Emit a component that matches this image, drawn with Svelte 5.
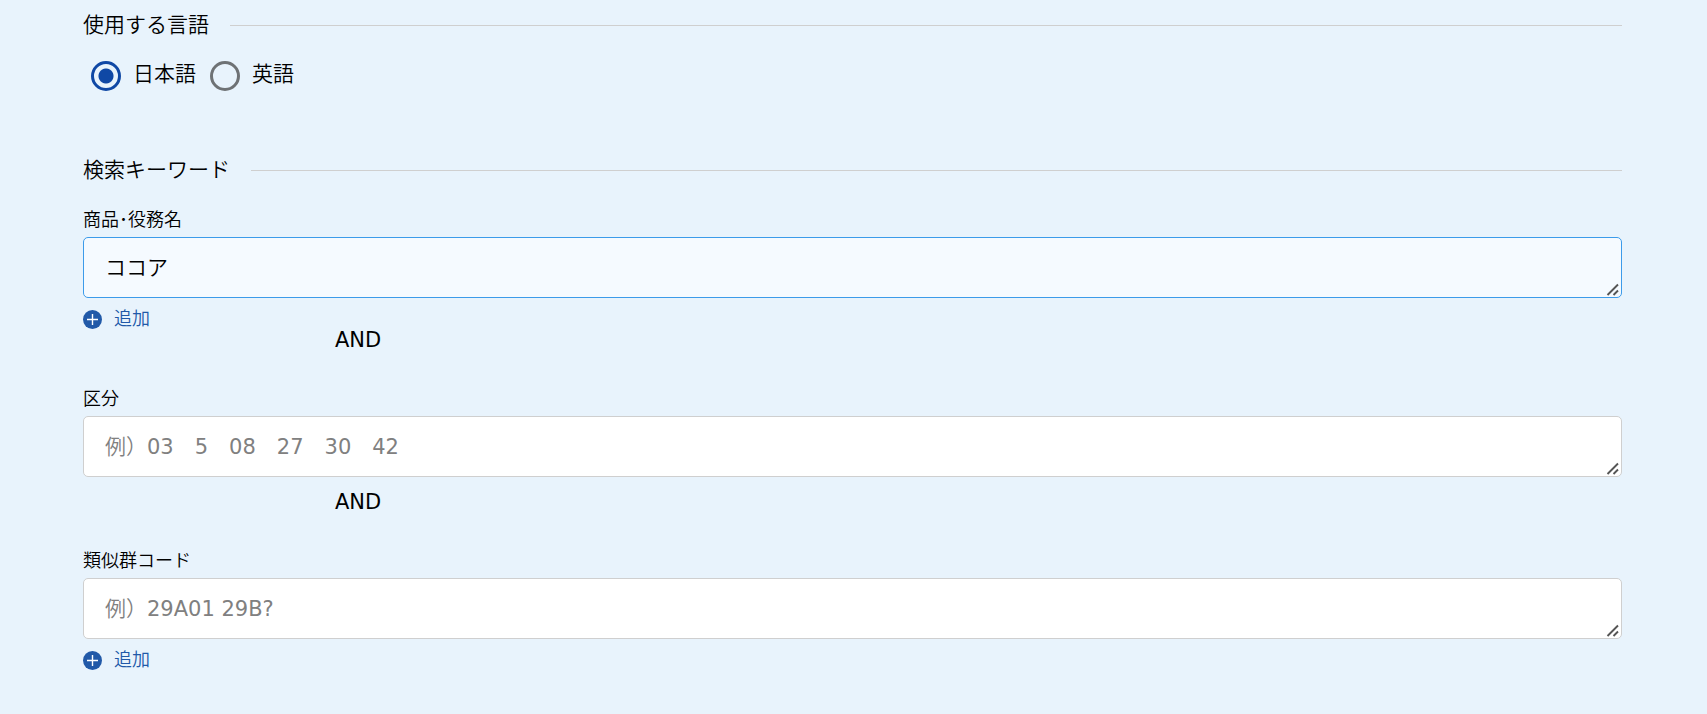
<script>
  let language = $state('ja');
  let goods = $state('ココア');
</script>

<main>
  <fieldset class="language">
    <legend class="heading">使用する言語</legend>
    <div class="radios">
      <label><input type="radio" name="language" value="ja" bind:group={language} />日本語</label>
      <label><input type="radio" name="language" value="en" bind:group={language} />英語</label>
    </div>
  </fieldset>

  <section>
    <h2 class="heading">検索キーワード</h2>
    <div class="field">
      <label for="goods">商品･役務名</label>
      <textarea id="goods" class="active" rows="1" bind:value={goods}></textarea>
      {@render add()}
    </div>
    <p class="and close">AND</p>
    <div class="field">
      <label for="division">区分</label>
      <textarea id="division" rows="1" placeholder="例）03　5　08　27　30　42"></textarea>
    </div>
    <p class="and">AND</p>
    <div class="field">
      <label for="code">類似群コード</label>
      <textarea id="code" rows="1" placeholder="例）29A01 29B?"></textarea>
      {@render add()}
    </div>
  </section>
</main>

{#snippet add()}
  <button type="button" class="add">
    <svg viewBox="0 0 19 19" aria-hidden="true"><circle cx="9.5" cy="9.5" r="9.5" /><path d="M9.5 4v11M4 9.5h11" /></svg>
    追加
  </button>
{/snippet}

<style>
  :global(body) { margin: 0; background: #e8f3fc; }
  main {
    padding: 9px 85px 40px 83px;
    color: #000;
    font: 21px/32px "DejaVu Sans", "Noto Sans CJK JP DemiLight", "Noto Sans CJK JP Light", "Noto Sans CJK JP", sans-serif;
  }
  fieldset { margin: 0; padding: 0; border: 0; min-width: 0; }
  .heading {
    display: flex;
    align-items: center;
    gap: 21px;
    width: 100%;
    margin: 0;
    padding: 0;
    font-size: 21px;
    font-weight: 400;
    line-height: 32px;
  }
  .heading::after { content: ""; flex: 1; height: 1px; background: #cfcfcf; }
  .radios { display: flex; gap: 14px; padding: 16px 8px 0; }
  .radios label { display: flex; align-items: center; gap: 12px; }
  .radios input {
    appearance: none;
    width: 30px;
    height: 30px;
    margin: 4px 0 0;
    border: 3px solid #6e7275;
    border-radius: 50%;
  }
  .radios input:checked { border-color: #0f48a5; background: radial-gradient(circle, #0f48a5 7px, transparent 8px); }
  section { margin-top: 63px; }
  .field { display: flex; flex-direction: column; align-items: flex-start; }
  .heading + .field { margin-top: 22px; }
  .field label { font-size: 18px; line-height: 24px; margin-bottom: 5px; }
  textarea {
    box-sizing: border-box;
    width: 100%;
    height: 61px;
    padding: 14px 21px;
    border: 1px solid #cfcfcf;
    border-radius: 5px;
    background: #fff;
    color: #000;
    font: inherit;
    overflow: hidden;
    resize: both;
  }
  textarea::-webkit-resizer {
    background: url("data:image/svg+xml,%3Csvg xmlns='http://www.w3.org/2000/svg' viewBox='0 0 15 15'%3E%3Cpath d='M1.5 13 12 2.5M7.500 13 12 8.500' stroke='%23555' stroke-width='1.9' fill='none'/%3E%3C/svg%3E") center / 15px 15px no-repeat;
  }
  textarea.active { border-color: #3c9bea; background: #f5faff; outline: 0; }
  textarea::placeholder { color: #808080; opacity: 1; }
  .add {
    display: flex;
    align-items: center;
    gap: 12px;
    margin-top: 9px;
    padding: 0;
    border: 0;
    background: none;
    color: #2159a8;
    font: inherit;
    font-size: 18px;
    line-height: 24px;
  }
  .add svg { width: 19px; height: 19px; fill: #2159a8; }
  .add path { stroke: #fff; stroke-width: 1.4; }
  .and { margin: 9px 0 31px 252px; }
  .and.close { margin-top: -7px; }
</style>
